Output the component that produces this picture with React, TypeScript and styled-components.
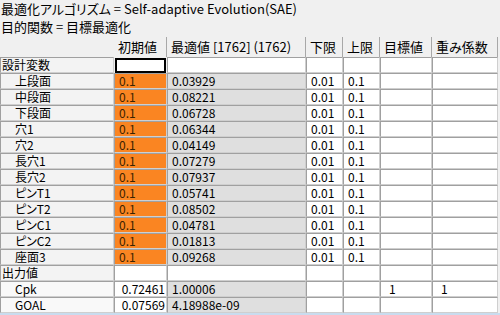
import { Fragment } from 'react'
import styled, { createGlobalStyle } from 'styled-components'

const GlobalStyle = createGlobalStyle`
  body {
    margin: 0;
    background: #f0f0f0;
    font-family: "Noto Sans CJK JP", "Noto Sans", sans-serif;
    font-size: 13px;
    color: #000;
  }
`

const Window = styled.div`
  width: 500px;
  height: 315px;
  overflow: hidden;
  display: flex;
  flex-direction: column;
`
const TitleLine = styled.div`
  height: 18px;
  line-height: 18px;
  padding-left: 1px;
  white-space: nowrap;
  font-feature-settings: 'palt';
`
const Grid = styled.div`
  margin-top: 1px;
  display: grid;
  grid-template-columns: 114px 53px 139px 37px 37px 52px 66px;
  grid-template-rows: 20px;
  grid-auto-rows: 16px;
`
const HeadCell = styled.div`
  padding: 0 1px 0 4px;
  line-height: 20px;
  white-space: nowrap;
  border-right: 1px solid #a8a8a8;
  font-feature-settings: 'palt';
  &:first-child {
    border-right: none;
  }
`
const Cell = styled.div`
  box-sizing: border-box;
  border-top: 1px solid #a0a0a0;
  border-left: 1px solid #a0a0a0;
  border-right: 1px solid #cfcfcf;
  border-bottom: 1px solid #cfcfcf;
  font-size: 12px;
  line-height: 14px;
  white-space: nowrap;
`
const LabelCell = styled(Cell)<{ $indent?: boolean; $light?: boolean }>`
  background: ${({ $light }) => ($light ? '#f9f9f9' : '#f3f3f3')};
  padding-left: ${({ $indent }) => ($indent ? 14 : 1)}px;
  font-feature-settings: 'palt';
`
const ValueCell = styled(Cell)<{ $tone?: 'orange' | 'gray' | 'white'; $right?: boolean; $pad?: number; $selected?: boolean }>`
  background: ${({ $tone }) => ($tone === 'orange' ? '#fa8522' : $tone === 'gray' ? '#dfdfdf' : '#ffffff')};
  color: ${({ $tone }) => ($tone === 'orange' ? '#3a2200' : '#000')};
  text-align: ${({ $right }) => ($right ? 'right' : 'left')};
  padding: 0 ${({ $right }) => ($right ? 1 : 0)}px 0 ${({ $pad }) => $pad ?? 4}px;
  ${({ $selected }) => ($selected ? 'border: 2px solid #000; margin: 1px 1px 0 1px;' : '')}
`
const BottomEdge = styled.div`
  height: 2px;
  background: #c9dcef;
`

const HEADERS = ['', '初期値', '最適値 [1762] (1762)', '下限', '上限', '目標値', '重み係数']

const VARIABLES: [string, string][] = [
  ['上段面', '0.03929'],
  ['中段面', '0.08221'],
  ['下段面', '0.06728'],
  ['穴1', '0.06344'],
  ['穴2', '0.04149'],
  ['長穴1', '0.07279'],
  ['長穴2', '0.07937'],
  ['ピンT1', '0.05741'],
  ['ピンT2', '0.08502'],
  ['ピンC1', '0.04781'],
  ['ピンC2', '0.01813'],
  ['座面3', '0.09268'],
]

const OUTPUTS = [
  { label: 'Cpk', init: '0.72461', best: '1.00006', target: '1', weight: '1' },
  { label: 'GOAL', init: '0.07569', best: '4.18988e-09', target: '', weight: '' },
]

function BlankRow({ label, selected }: { label: string; selected?: boolean }) {
  return (
    <>
      <LabelCell>{label}</LabelCell>
      <ValueCell $selected={selected} />
      <ValueCell />
      <ValueCell />
      <ValueCell />
      <ValueCell />
      <ValueCell />
    </>
  )
}

export default function App() {
  return (
    <Window>
      <GlobalStyle />
      <TitleLine>最適化アルゴリズム = Self-adaptive Evolution(SAE)</TitleLine>
      <TitleLine>目的関数 = 目標最適化</TitleLine>
      <Grid>
        {HEADERS.map((h, i) => (
          <HeadCell key={i}>{h}</HeadCell>
        ))}
        <BlankRow label="設計変数" selected />
        {VARIABLES.map(([name, best]) => (
          <Fragment key={name}>
            <LabelCell $indent>{name}</LabelCell>
            <ValueCell $tone="orange">0.1</ValueCell>
            <ValueCell $tone="gray">{best}</ValueCell>
            <ValueCell>0.01</ValueCell>
            <ValueCell>0.1</ValueCell>
            <ValueCell />
            <ValueCell />
          </Fragment>
        ))}
        <BlankRow label="出力値" />
        {OUTPUTS.map((o) => (
          <Fragment key={o.label}>
            <LabelCell $indent $light>
              {o.label}
            </LabelCell>
            <ValueCell $right>{o.init}</ValueCell>
            <ValueCell $tone="gray">{o.best}</ValueCell>
            <ValueCell />
            <ValueCell />
            <ValueCell $pad={8}>{o.target}</ValueCell>
            <ValueCell $pad={8}>{o.weight}</ValueCell>
          </Fragment>
        ))}
      </Grid>
      <BottomEdge />
    </Window>
  )
}
